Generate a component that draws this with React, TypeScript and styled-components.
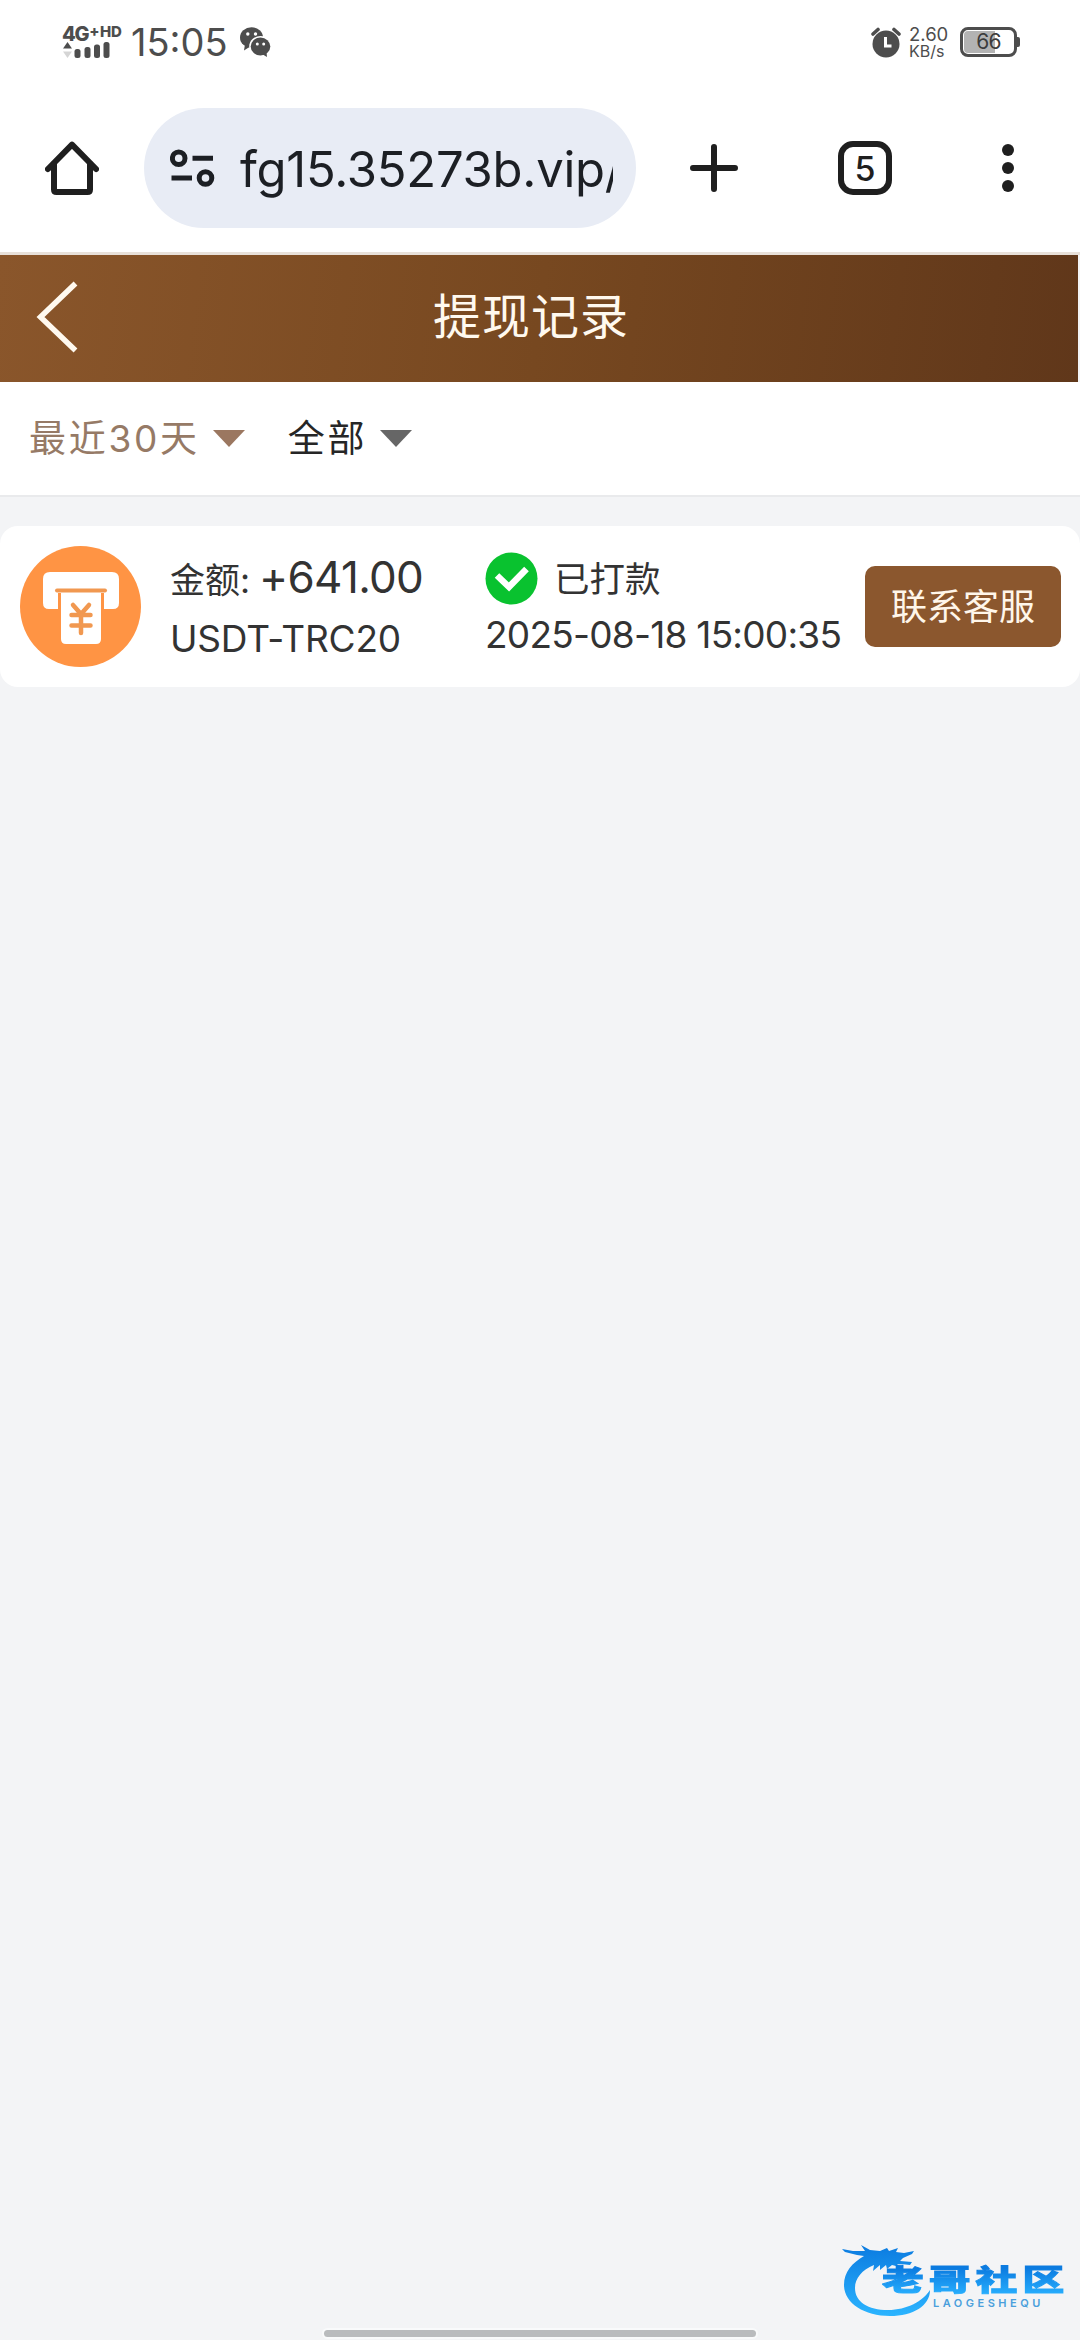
import React from "react";
import styled, { createGlobalStyle } from "styled-components";

const Global = createGlobalStyle`
  * { box-sizing: border-box; }
  html, body { margin: 0; padding: 0; background: #f3f4f6; }
  body { font-family: Inter, "Noto Sans CJK SC", sans-serif; color: #333; overflow: hidden; }
`;

const Screen = styled.div`
  position: relative;
  width: 1080px;
  height: 2340px;
  display: flex;
  flex-direction: column;
  background: #f3f4f6;
  overflow: hidden;
`;

const StatusBar = styled.header`
  height: 84px;
  flex: none;
  display: flex;
  justify-content: space-between;
  align-items: center;
  padding: 0 60px 0 62px;
  background: #fff;
  color: #4d4d4d;
`;

const StatusGroup = styled.div<{ $gap: number }>`
  display: flex;
  align-items: center;
  gap: ${(p) => p.$gap}px;
  height: 34px;
`;

const Signal = styled.div`
  width: 60px;
  height: 32px;
  display: flex;
  flex-direction: column;
  justify-content: space-between;
`;

const NetworkLabel = styled.div`
  display: flex;
  align-items: flex-start;
  font-size: 20px;
  line-height: 16px;
  font-weight: 800;
  letter-spacing: -1.3px;
  height: 16px;
  white-space: nowrap;
  sup {
    font-size: 15px;
    line-height: 11px;
    letter-spacing: -0.4px;
    vertical-align: top;
    margin-left: 1px;
  }
`;

const Clock = styled.div`
  width: 100px;
  font-size: 38px;
  line-height: 34px;
  white-space: nowrap;
  letter-spacing: 0;
`;

const Speed = styled.div`
  width: 43px;
  font-size: 18.5px;
  line-height: 17px;
  white-space: nowrap;
  span { display: block; }
  span + span { font-size: 16px; line-height: 16px; }
`;

const Battery = styled.div`
  display: flex;
  align-items: center;
`;

const BatteryBody = styled.div`
  width: 57px;
  height: 30px;
  border: 3px solid #4d4d4d;
  border-radius: 8px;
  background: linear-gradient(90deg, #b3b3b3 0 64%, #fff 64%) content-box;
  padding: 1px;
  display: flex;
  align-items: center;
  justify-content: center;
  font-size: 21px;
  font-weight: 400;
  line-height: 20px;
  letter-spacing: -0.8px;
  color: #3c3c3c;
`;

const BatteryTip = styled.div`
  width: 3px;
  height: 10px;
  border-radius: 0 2px 2px 0;
  background: #4d4d4d;
`;

const BrowserBar = styled.nav`
  height: 171px;
  flex: none;
  display: flex;
  align-items: center;
  padding: 0 66px 0 45px;
  background: #fff;
  border-bottom: 3px solid #e8e0d9;
`;

const HomeSlot = styled.div`
  width: 99px;
  height: 54px;
`;

const AddressPill = styled.div`
  width: 492px;
  height: 120px;
  border-radius: 60px;
  background: #e8ecf5;
  display: flex;
  align-items: center;
  padding: 0 23px 0 26px;
  gap: 25px;
`;

const Address = styled.div`
  flex: 1;
  overflow: hidden;
  white-space: nowrap;
  padding-top: 4px;
  font-size: 49px;
  line-height: 64px;
  letter-spacing: -0.25px;
  color: #1c1f24;
`;

const BrowserActions = styled.div`
  flex: 1;
  display: flex;
  align-items: center;
  justify-content: space-between;
  padding-left: 54px;
`;

const TabCount = styled.div`
  width: 54px;
  height: 54px;
  margin-right: 10px;
  border: 6px solid #1f1f1f;
  border-radius: 15px;
  display: flex;
  align-items: center;
  justify-content: center;
  padding-top: 2px;
  font-size: 34px;
  line-height: 40px;
  font-weight: 500;
  color: #1f1f1f;
`;

const TitleBar = styled.div`
  width: 1078px;
  height: 127px;
  flex: none;
  display: grid;
  grid-template-columns: 120px 822px 136px;
  align-items: center;
  padding-bottom: 4px;
  background: linear-gradient(97deg, #8a562b 0%, #774820 50%, #60371a 100%);
  color: #fff9ef;
`;

const BackButton = styled.div`
  padding-left: 35px;
  height: 76px;
`;

const Title = styled.h1`
  margin: 0;
  text-align: center;
  font-size: 48px;
  line-height: 60px;
  font-weight: 400;
  letter-spacing: 1px;
`;

const Filters = styled.div`
  height: 115px;
  flex: none;
  display: flex;
  align-items: center;
  gap: 43px;
  padding: 0 29px;
  background: #fff;
  border-bottom: 2px solid #e9eaec;
`;

const Filter = styled.div<{ $active?: boolean }>`
  display: flex;
  align-items: center;
  gap: 13px;
  font-size: 37px;
  line-height: 50px;
  letter-spacing: 2.7px;
  color: ${(p) => (p.$active ? "#967a66" : "#262626")};
  &::after {
    content: "";
    border: 16.5px solid transparent;
    border-top: 17px solid ${(p) => (p.$active ? "#9b7760" : "#666")};
    border-bottom: 0;
  }
`;

const Records = styled.main`
  flex: 1;
  padding-top: 29px;
`;

const Record = styled.article`
  height: 161px;
  border-radius: 18px;
  background: #fff;
  display: grid;
  grid-template-columns: 150px 315px 380px 196px;
  align-items: center;
  padding-left: 20px;
`;

const RecordColumn = styled.div`
  display: flex;
  flex-direction: column;
  padding-top: 2px;
  white-space: nowrap;
  color: #333;
`;

const AmountRow = styled.div`
  display: flex;
  align-items: baseline;
  gap: 9px;
  height: 60px;
  line-height: 60px;
  font-size: 35px;
`;

const Amount = styled.span`
  font-size: 44px;
  letter-spacing: -0.7px;
`;

const Channel = styled.div`
  padding-top: 2px;
  font-size: 37px;
  line-height: 60px;
  letter-spacing: -0.2px;
`;

const StateRow = styled.div`
  display: flex;
  align-items: center;
  gap: 16px;
  height: 54px;
  font-size: 35.5px;
  line-height: 54px;
`;

const StateLabel = styled.span`
  padding-top: 2px;
`;

const Timestamp = styled.div`
  font-size: 37px;
  line-height: 58px;
  letter-spacing: -0.75px;
`;

const SupportButton = styled.button`
  width: 196px;
  height: 81px;
  padding: 0;
  border: 0;
  border-radius: 10px;
  background: #8b572e;
  color: #fff6ea;
  font: 400 36px/50px Inter, "Noto Sans CJK SC", sans-serif;
`;

const Watermark = styled.div`
  position: absolute;
  left: 840px;
  top: 2240px;
  width: 226px;
  height: 76px;
`;

const WatermarkArt = styled.svg`
  position: absolute;
  inset: 0;
`;

const WatermarkName = styled.div`
  position: absolute;
  left: 42px;
  top: 23px;
  font-size: 29px;
  line-height: 36px;
  font-weight: 900;
  letter-spacing: 3.5px;
  white-space: nowrap;
  transform: scaleX(1.44);
  transform-origin: 0 0;
  background: linear-gradient(180deg, #0b7be0 15%, #28b0ff 90%);
  background-clip: text;
  -webkit-background-clip: text;
  -webkit-text-stroke: 1px transparent;
  color: transparent;
`;

const WatermarkLatin = styled.div`
  position: absolute;
  left: 93px;
  top: 56px;
  font-size: 11px;
  line-height: 14px;
  letter-spacing: 3.500px;
  font-weight: 600;
  color: #4a9fdc;
`;

const GestureBar = styled.div`
  position: absolute;
  left: 324px;
  top: 2330px;
  width: 432px;
  height: 7px;
  border-radius: 4px;
  background: #b9bbbd;
  box-shadow: 0 0 0 2px #f9fafb;
`;

const SignalBars = () => (
  <svg width="50" height="16" viewBox="0 0 50 16" fill="#4d4d4d">
    <path d="M1 6.5 5.5 0 10 6.5z" />
    <path d="M1 9.500 5.500 16 10 9.500z" fill="#d5d5d5" />
    <rect x="12.500" y="7" width="6" height="9" rx="2.500" />
    <rect x="22.500" y="5" width="6" height="11" rx="2.500" />
    <rect x="32" y="2.500" width="6" height="13.500" rx="2.500" />
    <rect x="41.500" y="0" width="6" height="16" rx="2.500" />
  </svg>
);

const ChatIcon = () => (
  <svg width="31" height="30" viewBox="0 0 31 30">
    <g fill="#4d4d4d">
      <ellipse cx="11.500" cy="10.500" rx="11.500" ry="10.300" />
      <path d="M5 17 4 23.500 11 19z" />
    </g>
    <ellipse cx="20.500" cy="19.500" rx="11.300" ry="10.500" fill="#fff" />
    <ellipse cx="20.500" cy="19.500" rx="9.800" ry="9" fill="#4d4d4d" />
    <path d="M22 27 27 30 26.500 25z" fill="#4d4d4d" />
    <g fill="#fff">
      <circle cx="7.800" cy="7" r="1.700" />
      <circle cx="15.500" cy="7" r="1.700" />
      <circle cx="17.300" cy="17" r="1.500" />
      <circle cx="23.700" cy="17" r="1.500" />
    </g>
  </svg>
);

const AlarmIcon = () => (
  <svg width="30" height="31" viewBox="0 0 30 31">
    <circle cx="15" cy="17" r="13.500" fill="#4d4d4d" />
    <path d="M2 7 7 2.500M28 7l-5-4.500" stroke="#4d4d4d" strokeWidth="3.600" strokeLinecap="round" />
    <path d="M14.500 10v9h6" fill="none" stroke="#fff" strokeWidth="3" />
  </svg>
);

const HomeIcon = () => (
  <svg width="54" height="54" viewBox="0 0 54 54" fill="none" stroke="#1f1f1f" strokeWidth="6" strokeLinecap="round" strokeLinejoin="round">
    <path d="M3 28 27 3.700 51 28" />
    <path d="M9 23v25.500q0 2.500 2.500 2.500h31q2.500 0 2.500-2.500V23" />
  </svg>
);

const TuneIcon = () => (
  <svg width="45" height="39" viewBox="0 0 45 39" fill="none" stroke="#1c1f24" strokeWidth="5">
    <circle cx="8.700" cy="9.300" r="6.300" />
    <circle cx="35.500" cy="29" r="6.300" />
    <path d="M22.500 9.300H43M1.500 29h20.500" />
  </svg>
);

const PlusIcon = () => (
  <svg width="48" height="48" viewBox="0 0 48 48" stroke="#1f1f1f" strokeWidth="6" strokeLinecap="round">
    <path d="M24 3v42M3 24h42" />
  </svg>
);

const MoreIcon = () => (
  <svg width="12" height="48" viewBox="0 0 12 48" fill="#1f1f1f">
    <circle cx="6" cy="6" r="6" />
    <circle cx="6" cy="24" r="6" />
    <circle cx="6" cy="42" r="6" />
  </svg>
);

const BackIcon = () => (
  <svg width="44" height="76" viewBox="0 0 44 76" fill="none" stroke="#fff9ef" strokeWidth="5.500">
    <path d="M40.500 4.500 5.500 38l35 33.500" />
  </svg>
);

const WithdrawIcon = () => (
  <svg width="121" height="121" viewBox="0 0 121 121">
    <circle cx="60.500" cy="60.500" r="60.500" fill="#ff9444" />
    <path d="M30 26h62q7 0 7 7v24q0 6-6 6H84V47H38v16H29q-6 0-6-6V33q0-7 7-7z" fill="#fff" />
    <path d="M37 44.500h48" stroke="#f19850" strokeWidth="4" strokeLinecap="round" />
    <path d="M41 47h40v46q0 5-5 5H46q-5 0-5-5z" fill="#fff" />
    <path d="M53 59l8 9 8-9M51.500 69h19M51.500 79.500h19M61 68v19" fill="none" stroke="#f19850" strokeWidth="4.500" strokeLinecap="round" />
  </svg>
);

const DoneIcon = () => (
  <svg width="53" height="53" viewBox="0 0 53 53">
    <circle cx="26.500" cy="26.500" r="26" fill="#09c22f" />
    <path d="M12 23.500l12 11.500L41.500 17" fill="none" stroke="#fff" strokeWidth="6.500" />
  </svg>
);

const DragonArt = () => (
  <WatermarkArt width="226" height="76" viewBox="0 0 226 76">
    <defs>
      <linearGradient id="wave" x1="0" y1="0" x2="0" y2="1">
        <stop offset="0" stopColor="#0b7be0" />
        <stop offset="1" stopColor="#2bb4ff" />
      </linearGradient>
    </defs>
    <path
      fill="url(#wave)"
      d="M2 9l11 2 12 0-4-6 9 5 10 1 7-3 2 3 9-3-2 4 8 1 10-2-2 3-9 4-3 3 12 1-2 3-9-1-4 0 3 3-8-2-5 4-1-4-6 5 0-5-7 6 1-6c-12 5-19 13-19 23 0 14 13 22 33 22 19 0 35-9 42-20 0 16-17 26-40 26-26 0-46-13-46-31 0-13 8-22 20-29l-7-1-12-3z"
    />
  </WatermarkArt>
);

export default function App() {
  return (
    <Screen>
      <Global />
      <StatusBar>
        <StatusGroup $gap={9}>
          <Signal>
            <NetworkLabel>4G<sup>+</sup><sup>HD</sup></NetworkLabel>
            <SignalBars />
          </Signal>
          <Clock>15:05</Clock>
          <ChatIcon />
        </StatusGroup>
        <StatusGroup $gap={8}>
          <AlarmIcon />
          <Speed><span>2.60</span><span>KB/s</span></Speed>
          <Battery>
            <BatteryBody>66</BatteryBody>
            <BatteryTip />
          </Battery>
        </StatusGroup>
      </StatusBar>
      <BrowserBar>
        <HomeSlot><HomeIcon /></HomeSlot>
        <AddressPill>
          <TuneIcon />
          <Address>fg15.35273b.vip/</Address>
        </AddressPill>
        <BrowserActions>
          <PlusIcon />
          <TabCount>5</TabCount>
          <MoreIcon />
        </BrowserActions>
      </BrowserBar>
      <TitleBar>
        <BackButton><BackIcon /></BackButton>
        <Title>提现记录</Title>
      </TitleBar>
      <Filters>
        <Filter $active>最近30天</Filter>
        <Filter>全部</Filter>
      </Filters>
      <Records>
        <Record>
          <WithdrawIcon />
          <RecordColumn>
            <AmountRow>金额: <Amount>+641.00</Amount></AmountRow>
            <Channel>USDT-TRC20</Channel>
          </RecordColumn>
          <RecordColumn>
            <StateRow><DoneIcon /><StateLabel>已打款</StateLabel></StateRow>
            <Timestamp>2025-08-18 15:00:35</Timestamp>
          </RecordColumn>
          <SupportButton>联系客服</SupportButton>
        </Record>
      </Records>
      <Watermark>
        <DragonArt />
        <WatermarkName>老哥社区</WatermarkName>
        <WatermarkLatin>LAOGESHEQU</WatermarkLatin>
      </Watermark>
      <GestureBar />
    </Screen>
  );
}
